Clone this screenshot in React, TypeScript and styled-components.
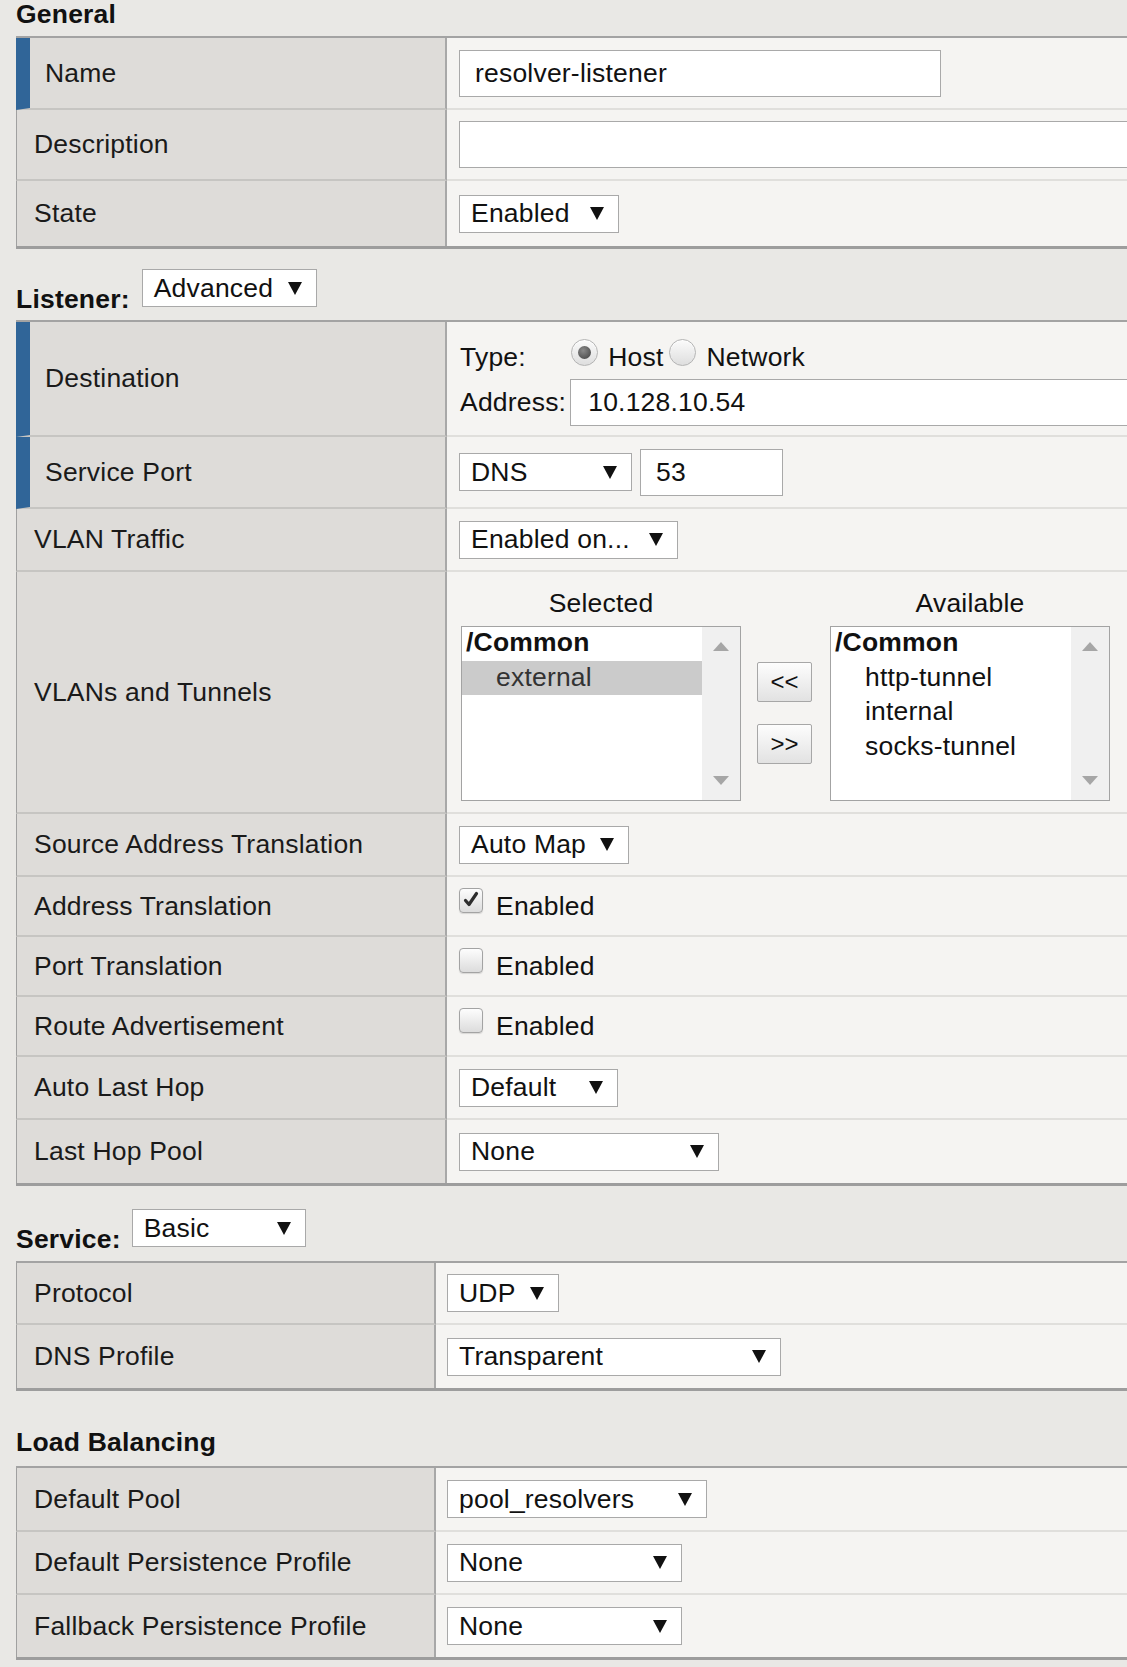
import React from 'react';
import styled, { createGlobalStyle } from 'styled-components';

const FS = '26.5px';
const LS = '0.2px';

const GlobalStyle = createGlobalStyle`
  html, body { margin: 0; padding: 0; background: #e9e8e5; }
  body { font-family: "Liberation Sans", Arial, sans-serif; color: #1a1a1a; overflow: hidden; letter-spacing: ${LS}; }
  * { box-sizing: border-box; }
`;

const Page = styled.div`
  width: 1127px;
  height: 1667px;
  overflow: hidden;
  padding-left: 16px;
`;

const Heading = styled.h2<{ $top: number; $bottom: number }>`
  margin: ${p => p.$top}px 0 ${p => p.$bottom}px;
  font-size: ${FS};
  line-height: 29px;
  font-weight: bold;
  color: #111;
`;

const HeaderBar = styled.div<{ $top: number; $bottom: number; $gap: number }>`
  display: flex;
  align-items: flex-end;
  gap: ${p => p.$gap}px;
  padding-top: ${p => p.$top}px;
  margin-bottom: ${p => p.$bottom}px;
`;

const BarLabel = styled.span`
  font-size: ${FS};
  line-height: 29px;
  font-weight: bold;
  color: #111;
  margin-bottom: -7px;
`;

const Table = styled.div`
  display: flex;
  flex-direction: column;
  border-top: 2px solid #a3a3a3;
  border-bottom: 3px solid #9d9d9d;
`;

const LabelCell = styled.div<{ $req?: boolean }>`
  display: flex;
  align-items: center;
  background: #dedcd9;
  border-left: ${p => (p.$req ? '14px solid #306598' : '1px solid #a0a0a0')};
  border-right: 2px solid #a8a8a8;
  padding-left: ${p => (p.$req ? 15 : 17)}px;
  font-size: ${FS};
  color: #1a1a1a;
  white-space: nowrap;
`;

const ValueCell = styled.div<{ $align?: string; $pt?: number; $pl?: number }>`
  display: flex;
  align-items: ${p => p.$align ?? 'center'};
  padding-left: ${p => p.$pl ?? 12}px;
  padding-top: ${p => p.$pt ?? 0}px;
  background: #f5f4f2;
  overflow: hidden;
  min-width: 0;
  font-size: ${FS};
  color: #111;
`;

const Row = styled.div<{ $h: number; $lw: number }>`
  display: grid;
  grid-template-columns: ${p => p.$lw}px 1fr;
  height: ${p => p.$h}px;
  &:not(:last-child) > ${LabelCell} { border-bottom: 2px solid #c6c5c2; }
  &:not(:last-child) > ${ValueCell} { border-bottom: 2px solid #e0dfdc; }
`;

const TextInput = styled.input<{ $w: number; $pl?: number; $ml?: number }>`
  flex-shrink: 0;
  width: ${p => p.$w}px;
  height: 47px;
  margin-left: ${p => p.$ml ?? 0}px;
  border: 1px solid #a9a9a9;
  border-radius: 0;
  background: #fff;
  padding: 0 0 0 ${p => p.$pl ?? 15}px;
  font-family: "Liberation Sans", Arial, sans-serif;
  font-size: ${FS};
  letter-spacing: ${LS};
  color: #111;
  outline: none;
`;

const SelectBox = styled.div<{ $w: number }>`
  flex-shrink: 0;
  display: flex;
  align-items: center;
  justify-content: space-between;
  width: ${p => p.$w}px;
  height: 38px;
  border: 1px solid #a9a9a9;
  background: #fff;
  padding: 0 14px 0 11px;
  font-size: ${FS};
  font-weight: normal;
  color: #111;
  white-space: nowrap;
`;

const Arrow = styled.span`
  width: 0;
  height: 0;
  border-left: 7px solid transparent;
  border-right: 7px solid transparent;
  border-top: 13px solid #111;
`;

const Select: React.FC<{ w: number; value: string }> = ({ w, value }) => (
  <SelectBox $w={w}>
    <span>{value}</span>
    <Arrow />
  </SelectBox>
);

const DestGrid = styled.div`
  display: grid;
  grid-template-columns: auto 1fr;
  grid-template-rows: 30px 47px;
  column-gap: 4px;
  row-gap: 7px;
  align-items: center;
  width: 100%;
`;

const RadioGroup = styled.div`
  display: flex;
  align-items: center;
`;

const Radio = styled.span<{ $on?: boolean }>`
  position: relative;
  width: 27px;
  height: 27px;
  border-radius: 50%;
  border: 1px solid #b4b4b4;
  background: linear-gradient(#fbfbfb, #dedede);
  box-shadow: inset 0 1px 1px rgba(255, 255, 255, 0.8);
  margin: 0 10px 10px 1px;
  flex-shrink: 0;
  &::after {
    content: '';
    display: ${p => (p.$on ? 'block' : 'none')};
    position: absolute;
    left: 6px;
    top: 6px;
    width: 13px;
    height: 13px;
    border-radius: 50%;
    background: radial-gradient(circle at 40% 35%, #8a8a8a, #555 70%);
  }
`;

const RadioText = styled.span`
  margin-right: 5px;
`;

const CheckRow = styled.div`
  display: flex;
  align-items: center;
  gap: 13px;
`;

const CheckBox = styled.span`
  width: 24px;
  height: 25px;
  border: 1px solid #a3a3a3;
  border-radius: 4px;
  background: linear-gradient(#fdfdfd, #dcdcdc);
  box-shadow: 0 1px 1px rgba(0, 0, 0, 0.12);
  margin-bottom: 12px;
  display: flex;
  align-items: center;
  justify-content: center;
`;

const Transfer = styled.div`
  display: flex;
  align-items: flex-start;
  margin-left: 2px;
`;

const ListColumn = styled.div`
  display: flex;
  flex-direction: column;
  align-items: center;
  gap: 8px;
`;

const ListHeader = styled.div`
  font-size: ${FS};
  line-height: 30px;
  color: #111;
`;

const ListBox = styled.div`
  display: grid;
  grid-template-columns: 1fr 38px;
  width: 280px;
  height: 175px;
  border: 1px solid #a3a3a3;
  background: #fff;
  overflow: hidden;
`;

const Items = styled.div`
  display: flex;
  flex-direction: column;
  margin-top: -1px;
`;

const Item = styled.div<{ $group?: boolean; $sel?: boolean }>`
  height: 34.5px;
  line-height: 33px;
  padding-left: ${p => (p.$group ? 4 : 34)}px;
  font-size: ${FS};
  font-weight: ${p => (p.$group ? 'bold' : 'normal')};
  background: ${p => (p.$sel ? '#cbcbcb' : 'transparent')};
  color: ${p => (p.$sel ? '#333' : '#111')};
  white-space: nowrap;
`;

const ScrollBar = styled.div`
  background: #f0f0f0;
  display: flex;
  flex-direction: column;
  justify-content: space-between;
  align-items: center;
  padding: 15px 0 15px;
`;

const ScrollArrow = styled.span<{ $down?: boolean }>`
  width: 0;
  height: 0;
  border-left: 8px solid transparent;
  border-right: 8px solid transparent;
  ${p => (p.$down ? 'border-top: 9px solid #a6a6a6;' : 'border-bottom: 9px solid #a6a6a6;')}
`;

const MoveButtons = styled.div`
  display: flex;
  flex-direction: column;
  gap: 22px;
  margin: 74px 18px 0 16px;
`;

const MoveButton = styled.button`
  width: 55px;
  height: 40px;
  padding: 0;
  border: 1px solid #a7a7a7;
  border-radius: 2px;
  background: linear-gradient(#fdfdfd, #e2e2e2);
  font-family: "Liberation Sans", Arial, sans-serif;
  font-size: 24px;
  color: #111;
`;

const ListPanel: React.FC<{ title: string; items: { t: string; g?: boolean; s?: boolean }[] }> = ({ title, items }) => (
  <ListColumn>
    <ListHeader>{title}</ListHeader>
    <ListBox>
      <Items>
        {items.map(it => (
          <Item key={it.t} $group={it.g} $sel={it.s}>{it.t}</Item>
        ))}
      </Items>
      <ScrollBar>
        <ScrollArrow />
        <ScrollArrow $down />
      </ScrollBar>
    </ListBox>
  </ListColumn>
);

const Check: React.FC<{ on?: boolean }> = ({ on }) => (
  <CheckBox>
    {on && (
      <svg width="18" height="18" viewBox="0 0 18 18">
        <path d="M3.5 9.5 L7 13.5 L14.5 2.5" stroke="#2e2e2e" strokeWidth="3.2" fill="none" strokeLinecap="round" strokeLinejoin="round" />
      </svg>
    )}
  </CheckBox>
);

const L1 = 431;
const L2 = 420;

export default function App() {
  return (
    <>
      <GlobalStyle />
      <Page>
        <Heading $top={0} $bottom={7}>General</Heading>
        <Table>
          <Row $h={72} $lw={L1}>
            <LabelCell $req>Name</LabelCell>
            <ValueCell><TextInput $w={482} defaultValue="resolver-listener" readOnly /></ValueCell>
          </Row>
          <Row $h={71} $lw={L1}>
            <LabelCell>Description</LabelCell>
            <ValueCell><TextInput $w={800} defaultValue="" readOnly /></ValueCell>
          </Row>
          <Row $h={65} $lw={L1}>
            <LabelCell>State</LabelCell>
            <ValueCell><Select w={160} value="Enabled" /></ValueCell>
          </Row>
        </Table>

        <HeaderBar $top={20} $bottom={13} $gap={12}>
          <BarLabel>Listener:</BarLabel>
          <Select w={175} value="Advanced" />
        </HeaderBar>
        <Table>
          <Row $h={115} $lw={L1}>
            <LabelCell $req>Destination</LabelCell>
            <ValueCell $align="flex-start" $pt={20} $pl={13}>
              <DestGrid>
                <span>Type:</span>
                <RadioGroup>
                  <Radio $on />
                  <RadioText>Host</RadioText>
                  <Radio />
                  <RadioText>Network</RadioText>
                </RadioGroup>
                <span>Address:</span>
                <TextInput $w={700} $pl={17} defaultValue="10.128.10.54" readOnly />
              </DestGrid>
            </ValueCell>
          </Row>
          <Row $h={72} $lw={L1}>
            <LabelCell $req>Service Port</LabelCell>
            <ValueCell>
              <Select w={173} value="DNS" />
              <TextInput $w={143} $ml={8} defaultValue="53" readOnly />
            </ValueCell>
          </Row>
          <Row $h={63} $lw={L1}>
            <LabelCell>VLAN Traffic</LabelCell>
            <ValueCell><Select w={219} value="Enabled on..." /></ValueCell>
          </Row>
          <Row $h={242} $lw={L1}>
            <LabelCell>VLANs and Tunnels</LabelCell>
            <ValueCell $align="flex-start" $pt={16}>
              <Transfer>
                <ListPanel title="Selected" items={[{ t: '/Common', g: true }, { t: 'external', s: true }]} />
                <MoveButtons>
                  <MoveButton>&lt;&lt;</MoveButton>
                  <MoveButton>&gt;&gt;</MoveButton>
                </MoveButtons>
                <ListPanel
                  title="Available"
                  items={[{ t: '/Common', g: true }, { t: 'http-tunnel' }, { t: 'internal' }, { t: 'socks-tunnel' }]}
                />
              </Transfer>
            </ValueCell>
          </Row>
          <Row $h={63} $lw={L1}>
            <LabelCell>Source Address Translation</LabelCell>
            <ValueCell><Select w={170} value="Auto Map" /></ValueCell>
          </Row>
          <Row $h={60} $lw={L1}>
            <LabelCell>Address Translation</LabelCell>
            <ValueCell><CheckRow><Check on /><span>Enabled</span></CheckRow></ValueCell>
          </Row>
          <Row $h={60} $lw={L1}>
            <LabelCell>Port Translation</LabelCell>
            <ValueCell><CheckRow><Check /><span>Enabled</span></CheckRow></ValueCell>
          </Row>
          <Row $h={60} $lw={L1}>
            <LabelCell>Route Advertisement</LabelCell>
            <ValueCell><CheckRow><Check /><span>Enabled</span></CheckRow></ValueCell>
          </Row>
          <Row $h={63} $lw={L1}>
            <LabelCell>Auto Last Hop</LabelCell>
            <ValueCell><Select w={159} value="Default" /></ValueCell>
          </Row>
          <Row $h={63} $lw={L1}>
            <LabelCell>Last Hop Pool</LabelCell>
            <ValueCell><Select w={260} value="None" /></ValueCell>
          </Row>
        </Table>

        <HeaderBar $top={23} $bottom={14} $gap={11}>
          <BarLabel>Service:</BarLabel>
          <Select w={174} value="Basic" />
        </HeaderBar>
        <Table>
          <Row $h={62} $lw={L2}>
            <LabelCell>Protocol</LabelCell>
            <ValueCell $pl={11}><Select w={112} value="UDP" /></ValueCell>
          </Row>
          <Row $h={63} $lw={L2}>
            <LabelCell>DNS Profile</LabelCell>
            <ValueCell $pl={11}><Select w={334} value="Transparent" /></ValueCell>
          </Row>
        </Table>

        <Heading $top={37} $bottom={9}>Load Balancing</Heading>
        <Table>
          <Row $h={64} $lw={L2}>
            <LabelCell>Default Pool</LabelCell>
            <ValueCell $pl={11}><Select w={260} value="pool_resolvers" /></ValueCell>
          </Row>
          <Row $h={63} $lw={L2}>
            <LabelCell>Default Persistence Profile</LabelCell>
            <ValueCell $pl={11}><Select w={235} value="None" /></ValueCell>
          </Row>
          <Row $h={62} $lw={L2}>
            <LabelCell>Fallback Persistence Profile</LabelCell>
            <ValueCell $pl={11}><Select w={235} value="None" /></ValueCell>
          </Row>
        </Table>
      </Page>
    </>
  );
}
